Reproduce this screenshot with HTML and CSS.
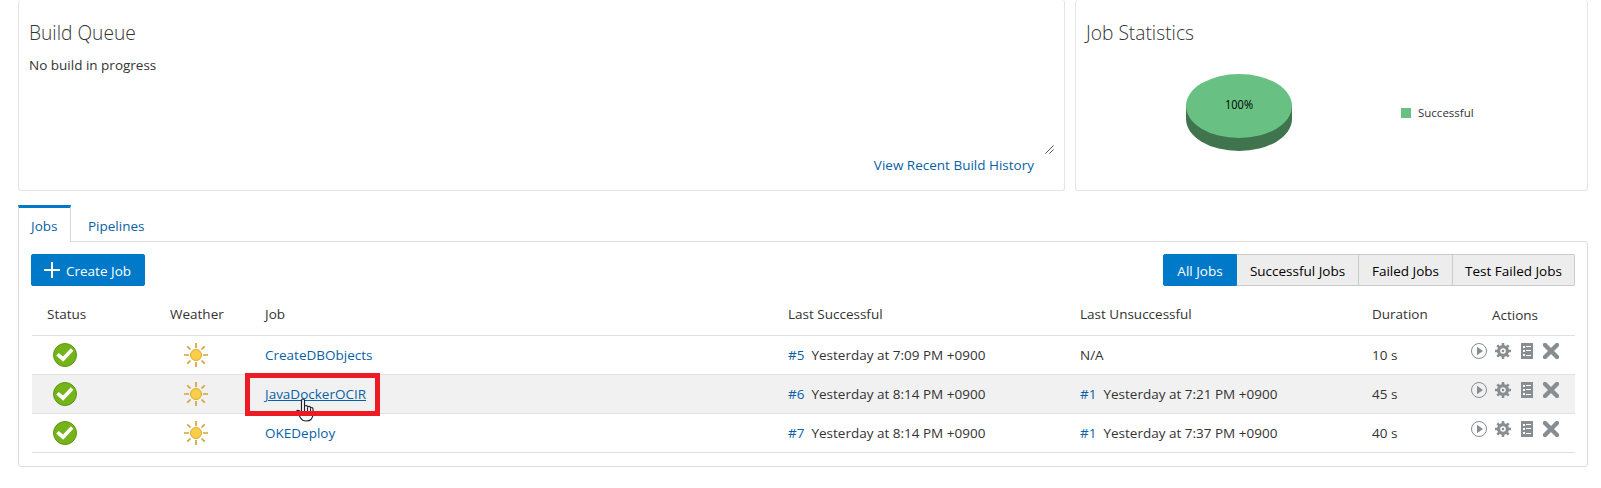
FILE: index.html
```html
<!DOCTYPE html>
<html lang="en">
<head>
<meta charset="utf-8">
<title>Builds</title>
<link rel="stylesheet" href="styles.css">
</head>
<body>
<svg class="defs" width="0" height="0" aria-hidden="true">
  <symbol id="ok" viewBox="0 0 24 24">
    <circle cx="12" cy="12" r="11.5" fill="#75b31a" stroke="#5c980f"/>
    <path d="M3.200 12.400 5.800 9.900l4.200 3.700 7.800-8.300 2.600 2.500-10.200 10.900z" fill="#fff"/>
  </symbol>
  <symbol id="sun" viewBox="0 0 24 24">
    <circle cx="12" cy="12" r="5.500" fill="#fbce4a" stroke="#d9a935"/>
    <path d="M12 0v5M12 19v5M0 12h5M19 12h5M3.300 3.300l3.200 3.200M17.500 17.500l3.200 3.200M3.300 20.700l3.200-3.200M17.500 6.500l3.200-3.200" stroke="#cfa53a" stroke-width="1.700" fill="none"/>
  </symbol>
  <symbol id="play" viewBox="0 0 16 16">
    <circle cx="8" cy="8" r="7.500" fill="none" stroke="#878d91"/>
    <path d="M6 3.800v8.400L12 8z" fill="#878d91"/>
  </symbol>
  <symbol id="gear" viewBox="0 0 16 16">
    <circle cx="8" cy="8" r="4.400" fill="none" stroke="#878d91" stroke-width="3.200"/>
    <path d="M8 0v3M8 13v3M0 8h3M13 8h3M2.300 2.300l2.200 2.200M11.500 11.500l2.200 2.200M2.300 13.700l2.200-2.200M11.500 4.500l2.200-2.200" stroke="#878d91" stroke-width="2.600"/>
    <circle cx="8" cy="8" r="1.300" fill="#878d91"/>
  </symbol>
  <symbol id="log" viewBox="0 0 16 16">
    <path d="M2 0h12v16H2z" fill="#878d91"/>
    <path d="M4 3h2v2H4zM4 7h2v2H4zM4 11h2v2H4zM7 3h5v1H7zM7 7h5v1H7zM7 12h5v1H7z" fill="#fff"/>
  </symbol>
  <symbol id="del" viewBox="0 0 16 16">
    <path d="M2 2l12 12M14 2L2 14" stroke="#878d91" stroke-width="4.400" stroke-linecap="round"/>
  </symbol>
</svg>

<main class="page">
  <div class="top">
    <section class="card queue">
      <h2>Build Queue</h2>
      <div class="queue-body">No build in progress
        <svg class="grip" width="9" height="9" viewBox="0 0 9 9"><path d="M.5 8.500l8-8M4.500 8.500l4-4" stroke="#555" fill="none"/></svg>
      </div>
      <a class="history" href="#">View Recent Build History</a>
    </section>
    <section class="card stats">
      <h2>Job Statistics</h2>
      <div class="chart">
        <svg class="pie" width="106" height="78" viewBox="0 0 106 78">
          <path d="M0 31.500V45a53 32 0 0 0 106 0V31.500z" fill="#40744f"/>
          <ellipse cx="53" cy="32" rx="53" ry="32" fill="#68c182"/>
          <text x="53" y="35" text-anchor="middle" textLength="28" lengthAdjust="spacingAndGlyphs">100%</text>
        </svg>
        <div class="legend"><i></i><span>Successful</span></div>
      </div>
    </section>
  </div>

  <nav class="tabs"><a class="tab active" href="#">Jobs</a><a class="tab" href="#">Pipelines</a></nav>
  <section class="panel">
    <div class="toolbar">
      <button class="create"><svg width="16" height="16" viewBox="0 0 16 16"><path d="M8 0v16M0 8h16" stroke="#fff" stroke-width="2"/></svg><span>Create Job</span></button>
      <div class="filters"><button class="on">All Jobs</button><button>Successful Jobs</button><button>Failed Jobs</button><button>Test Failed Jobs</button></div>
    </div>
    <div class="table">
      <div class="row head"><span class="status">Status</span><span class="weather">Weather</span><span>Job</span><span>Last Successful</span><span>Last Unsuccessful</span><span>Duration</span><span class="actions-head">Actions</span></div>
      <div class="row">
        <svg class="big"><use href="#ok"/></svg><svg class="big"><use href="#sun"/></svg>
        <a href="#">CreateDBObjects</a>
        <span class="build"><a href="#">#5</a><span>Yesterday at 7:09 PM +0900</span></span>
        <span>N/A</span><span>10 s</span>
        <span class="actions"><svg><use href="#play"/></svg><svg><use href="#gear"/></svg><svg><use href="#log"/></svg><svg><use href="#del"/></svg></span>
      </div>
      <div class="row hover">
        <svg class="big"><use href="#ok"/></svg><svg class="big"><use href="#sun"/></svg>
        <span class="marked"><a href="#">JavaDockerOCIR</a>
          <svg class="hand" width="18" height="24" viewBox="0 0 18 24"><path d="M5.500 14V2.500a1.500 1.500 0 0 1 3 0V9q0-1.500 1.500-1.500T11.500 9v.500q0-1.200 1.500-1.200t1.500 1.200v1q0-1 1.200-1t1.300 1.300V16q0 3-2 5.500-1.500 1.500-5 1.500t-5-2.500L1 14.500q-.8-1.500.2-2t2 .3z" fill="#fff" stroke="#1c2030" stroke-width="1.200"/><path d="M8.500 9v4M11.500 9.500V13M14.500 10.500V13" stroke="#1c2030" stroke-width="1.200"/></svg>
          <i class="box"></i>
        </span>
        <span class="build"><a href="#">#6</a><span>Yesterday at 8:14 PM +0900</span></span>
        <span class="build"><a href="#">#1</a><span>Yesterday at 7:21 PM +0900</span></span><span>45 s</span>
        <span class="actions"><svg><use href="#play"/></svg><svg><use href="#gear"/></svg><svg><use href="#log"/></svg><svg><use href="#del"/></svg></span>
      </div>
      <div class="row">
        <svg class="big"><use href="#ok"/></svg><svg class="big"><use href="#sun"/></svg>
        <a href="#">OKEDeploy</a>
        <span class="build"><a href="#">#7</a><span>Yesterday at 8:14 PM +0900</span></span>
        <span class="build"><a href="#">#1</a><span>Yesterday at 7:37 PM +0900</span></span><span>40 s</span>
        <span class="actions"><svg><use href="#play"/></svg><svg><use href="#gear"/></svg><svg><use href="#log"/></svg><svg><use href="#del"/></svg></span>
      </div>
    </div>
  </section>
</main>
</body>
</html>
```
FILE: styles.css
```css
* { box-sizing: border-box; }
body {
  margin: 0;
  height: 488px;
  overflow: hidden;
  background: #fff;
  color: #333;
  font: 370 13.5px/20px "Open Sans", "Noto Sans", sans-serif;
  font-stretch: 89%;
}
a { color: #0a5fa5; text-decoration: none; }
svg { display: block; }
.defs { position: absolute; }
.page { padding: 0 13px 0 18px; }
.top { display: grid; grid-template-columns: 1047px 513px; gap: 10px; height: 191px; }
.card { border: 1px solid #e2e4e5; border-top: 0; border-radius: 3px; padding: 20px 10px 0; }
h2 { margin: 0; font-size: 19.2px; line-height: 26px; font-weight: 320; }
.queue { display: flex; flex-direction: column; }
.queue-body { position: relative; height: 99px; margin-top: 9px; }
.grip { position: absolute; right: 0; bottom: 0; }
.history { align-self: flex-end; margin: 1px 20px 0 0; }
.chart { display: flex; align-items: flex-start; padding: 28px 0 0 100px; }
.pie { font-size: 12px; fill: #000; }
.legend { display: flex; align-items: center; gap: 7px; margin: 29px 0 0 109px; font-size: 11.500px; }
.legend i { width: 10px; height: 10px; background: #68c182; }

.tabs { display: flex; height: 37px; margin-top: 14px; }
.tab { padding: 11px 17px 0; }
.tab.active { width: 53px; padding: 8px 0 0 12px; border: 1px solid #d6dadb; border-top: 3px solid #0079c8; border-bottom: 0; background: #fff; position: relative; z-index: 1; }
.panel { margin-top: -1px; height: 226px; border: 1px solid #d9dcdd; border-radius: 0 3px 3px 3px; padding: 12px; }
.toolbar { display: flex; justify-content: space-between; height: 32px; }
button { font: inherit; font-stretch: inherit; border: 1px solid #c8cbcc; margin: 0; padding: 2px 0 0; background: #ededed; color: #000; height: 32px; }
.create { display: flex; align-items: center; width: 114px; padding: 0 0 0 12px; gap: 6px; background: #0079c8; border-color: #0079c8; border-radius: 2px; color: #fff; }
.create span { padding-top: 2px; }
.filters { display: grid; grid-template-columns: 74px 122px 94px 122px; }
.filters button + button { border-left: 0; }
.filters .on { background: #0079c8; border-color: #0079c8; color: #fff; border-radius: 2px 0 0 2px; }
.filters button:last-child { border-radius: 0 2px 2px 0; }
.table { margin-left: 1px; }
.row { display: grid; grid-template-columns: 66px 167px 523px 292px 292px 94px 109px; height: 39px; align-items: center; border-bottom: 1px solid #dfe1e2; }
.row > * { white-space: nowrap; }
.row > :first-child:is(svg) { margin-left: 21px; }
.row > svg:nth-child(2) { margin-left: 86px; }
.head { height: 50px; padding-top: 7px; }
.status { padding-left: 15px; }
.weather { padding-left: 72px; }
.big { width: 24px; height: 24px; }
.hover { background: #f1f1f1; }
.build { display: flex; gap: 7px; }
.marked { position: relative; }
.marked a { text-decoration: underline; }
.box { position: absolute; left: -20px; top: -11px; width: 135px; height: 43px; border: 5px solid #ed1c24; }
.hand { position: absolute; left: 31px; top: 14px; }
.actions { display: flex; gap: 8px; padding: 0 0 8px 5px; }
.actions svg { width: 16px; height: 16px; }
.actions-head { padding: 2px 0 0 26px; }
```
